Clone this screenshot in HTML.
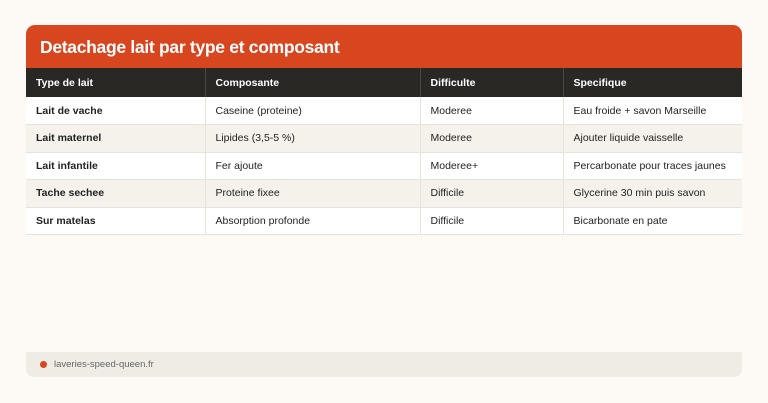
<!DOCTYPE html>
<html><head><meta charset="utf-8"><style>
*{margin:0;padding:0;box-sizing:border-box}
body{width:768px;height:403px;background:#fdf9f5;font-family:"Liberation Sans",sans-serif;position:relative;overflow:hidden}
.card{position:absolute;left:26px;top:25px;width:716px}
.hd{background:#d84620;height:43px;border-radius:9px 9px 0 0;color:#fff;font-weight:bold;font-size:17.5px;padding:12px 0 0 14px;letter-spacing:-0.3px}
table{border-collapse:collapse;width:716px;font-size:10.5px;color:#222;table-layout:fixed}
th{background:#2a2825;color:#fff;font-weight:bold;text-align:left;height:29px;padding:0 10px;border-left:1px solid #4a4744;white-space:nowrap}
th:first-child,td:first-child{border-left:none}
td{height:27.5px;padding:0 10px;border-left:1px solid #e6e2dc;border-bottom:1px solid #e6e2dc;background:#fff;white-space:nowrap}
tr.a td{background:#f5f2ec}
td:first-child{font-weight:bold}
.ft{position:absolute;left:26px;top:352px;width:716px;height:25px;background:#efebe5;border-radius:0 0 8px 8px;font-size:9.5px;color:#666;padding:7px 0 0 28px}
.ft:before{content:"";position:absolute;left:14px;top:9px;width:7px;height:7px;border-radius:50%;background:#d84620}
</style></head><body>
<div class="card">
<div class="hd">Detachage lait par type et composant</div>
<table>
<tr><th style="width:179px">Type de lait</th><th style="width:215px">Composante</th><th style="width:143px">Difficulte</th><th>Specifique</th></tr>
<tr><td>Lait de vache</td><td>Caseine (proteine)</td><td>Moderee</td><td>Eau froide + savon Marseille</td></tr>
<tr class="a"><td>Lait maternel</td><td>Lipides (3,5-5 %)</td><td>Moderee</td><td>Ajouter liquide vaisselle</td></tr>
<tr><td>Lait infantile</td><td>Fer ajoute</td><td>Moderee+</td><td>Percarbonate pour traces jaunes</td></tr>
<tr class="a"><td>Tache sechee</td><td>Proteine fixee</td><td>Difficile</td><td>Glycerine 30 min puis savon</td></tr>
<tr><td>Sur matelas</td><td>Absorption profonde</td><td>Difficile</td><td>Bicarbonate en pate</td></tr>
</table>
</div>
<div class="ft">laveries-speed-queen.fr</div>
</body></html>
